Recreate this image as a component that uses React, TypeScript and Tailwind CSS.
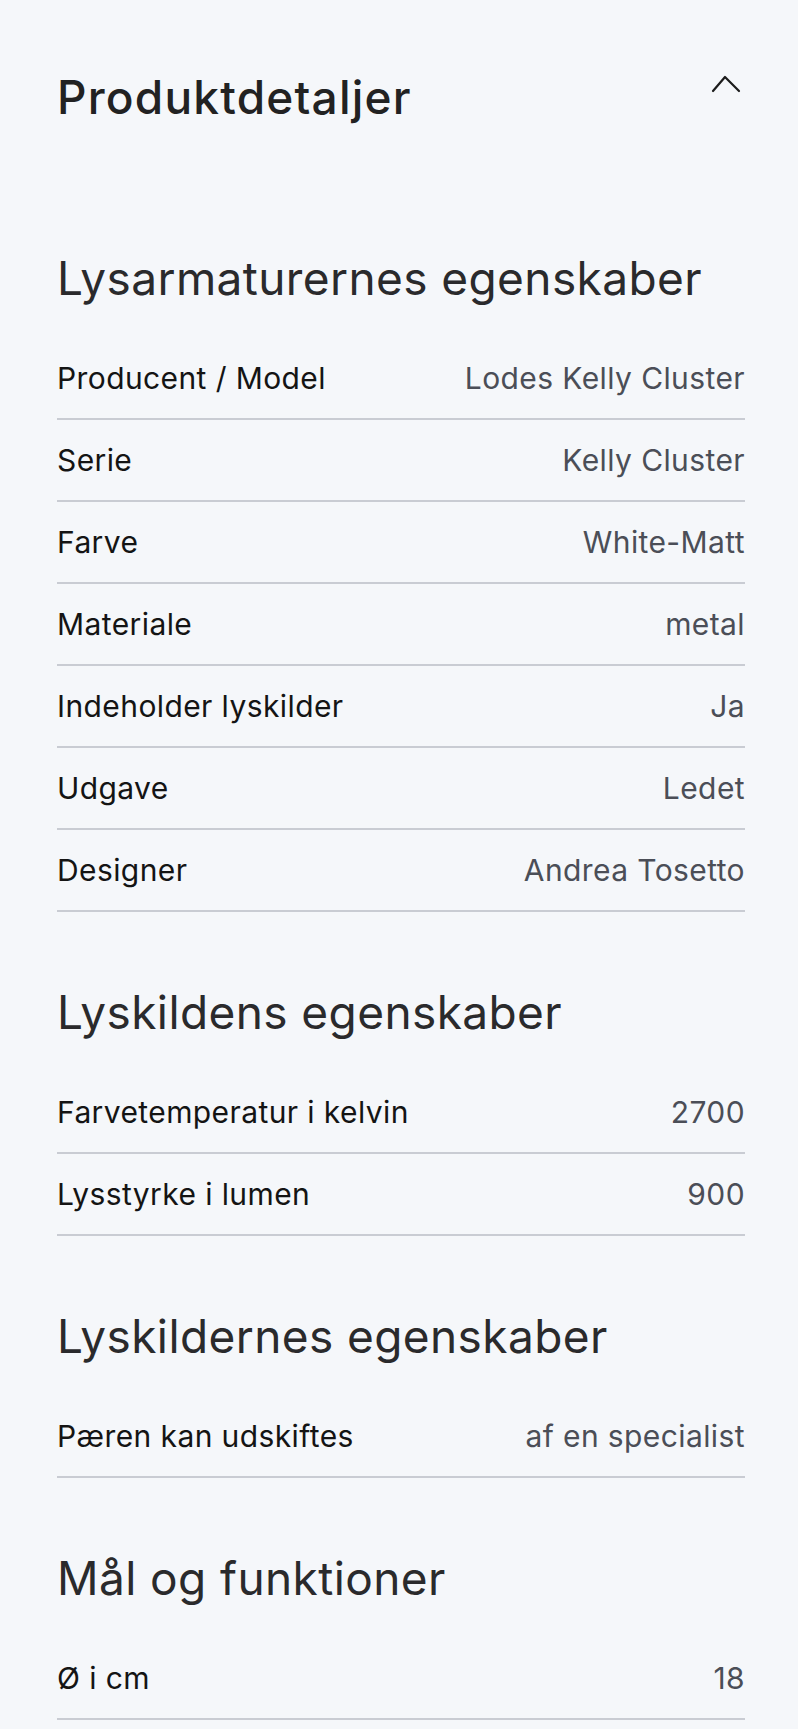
type Spec = { label: string; value: string };

type Section = { title: string; rows: Spec[] };

const sections: Section[] = [
  {
    title: 'Lysarmaturernes egenskaber',
    rows: [
      { label: 'Producent / Model', value: 'Lodes Kelly Cluster' },
      { label: 'Serie', value: 'Kelly Cluster' },
      { label: 'Farve', value: 'White-Matt' },
      { label: 'Materiale', value: 'metal' },
      { label: 'Indeholder lyskilder', value: 'Ja' },
      { label: 'Udgave', value: 'Ledet' },
      { label: 'Designer', value: 'Andrea Tosetto' },
    ],
  },
  {
    title: 'Lyskildens egenskaber',
    rows: [
      { label: 'Farvetemperatur i kelvin', value: '2700' },
      { label: 'Lysstyrke i lumen', value: '900' },
    ],
  },
  {
    title: 'Lyskildernes egenskaber',
    rows: [{ label: 'Pæren kan udskiftes', value: 'af en specialist' }],
  },
  {
    title: 'Mål og funktioner',
    rows: [{ label: 'Ø i cm', value: '18' }],
  },
];

function ChevronUp() {
  return (
    <svg width="36" height="36" viewBox="0 0 36 36" fill="none">
      <polyline
        points="4,25 16,11 30,25"
        stroke="#1c1c1c"
        strokeWidth="2.2"
        strokeLinecap="round"
        strokeLinejoin="round"
      />
    </svg>
  );
}

export default function App() {
  return (
    <div
      className="min-h-screen bg-[#f5f7fa] pl-[57px] pr-[53px] pb-[12px]"
      style={{ fontFamily: 'Inter, "Noto Sans", sans-serif' }}
    >
      {/* Accordion header */}
      <div className="flex justify-between items-start pt-[66px]">
        <h2 className="mt-[5px] text-[46px] leading-[52px] font-medium text-[#222222] tracking-[1.2px]">
          Produktdetaljer
        </h2>
        <button className="w-[36px] h-[36px]">
          <ChevronUp />
        </button>
      </div>

      {/* Spec tables */}
      <div className="pt-[127px]">
        {sections.map((section, i) => (
          <div key={section.title} className={i > 0 ? 'mt-[72px]' : ''}>
            <h3 className="text-[46px] leading-[56px] font-normal text-[#2a2a2c] mb-[32px] tracking-[0.4px]">
              {section.title}
            </h3>
            <div>
              {section.rows.map((row) => (
                <div
                  key={row.label}
                  className="flex justify-between items-center h-[82px] border-b-2 border-[#c9ccd3]"
                >
                  <span className="text-[30px] text-[#141414] tracking-[0.4px]">
                    {row.label}
                  </span>
                  <span className="text-[30px] text-[#4b4e57] tracking-[0.4px]">
                    {row.value}
                  </span>
                </div>
              ))}
            </div>
          </div>
        ))}
      </div>
    </div>
  );
}
